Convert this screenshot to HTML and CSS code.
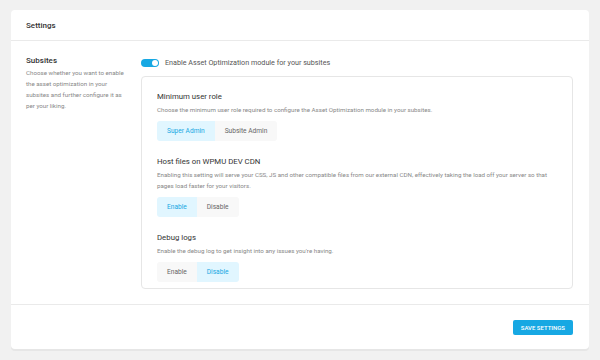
FILE: index.html
```html
<!DOCTYPE html>
<html lang="en">

<head>
    <meta charset="UTF-8">
    <meta name="viewport" content="width=device-width, initial-scale=1.0">
    <title>Settings</title>
    <link rel="stylesheet" href="styles.css">
</head>

<body>
    <div class="box">
        <div class="box-header">
            <h3>Settings</h3>
        </div>

        <div class="box-body">
            <div class="label-col">
                <h4>Subsites</h4>
                <p>Choose whether you want to enable the asset optimization in your subsites and further configure it as per your liking.</p>
            </div>

            <div class="content-col">
                <label class="toggle-row">
                    <span class="toggle"><span class="knob"></span></span>
                    Enable Asset Optimization module for your subsites
                </label>

                <div class="inner-box">
                    <div class="setting">
                        <h5>Minimum user role</h5>
                        <p>Choose the minimum user role required to configure the Asset Optimization module in your subsites.</p>
                        <div class="tabs">
                            <span class="tab active">Super Admin</span>
                            <span class="tab">Subsite Admin</span>
                        </div>
                    </div>

                    <div class="setting">
                        <h5>Host files on WPMU DEV CDN</h5>
                        <p>Enabling this setting will serve your CSS, JS and other compatible files from our external CDN, effectively taking the load off your server so that pages load faster for your visitors.</p>
                        <div class="tabs">
                            <span class="tab active">Enable</span>
                            <span class="tab">Disable</span>
                        </div>
                    </div>

                    <div class="setting">
                        <h5>Debug logs</h5>
                        <p>Enable the debug log to get insight into any issues you're having.</p>
                        <div class="tabs">
                            <span class="tab">Enable</span>
                            <span class="tab active">Disable</span>
                        </div>
                    </div>
                </div>
            </div>
        </div>

        <div class="box-footer">
            <button class="save-btn">Save Settings</button>
        </div>
    </div>
</body>

</html>
```

FILE: styles.css
```css
* {
    box-sizing: border-box;
}

body {
    margin: 0;
    padding: 10px 11px;
    background-color: #f1f1f1;
    font-family: Roboto, 'Liberation Sans', sans-serif;
    color: #333;
}

.box {
    width: 578px;
    background-color: #fff;
    border-radius: 4px;
    box-shadow: 0 2px 0 #e6e6e6;
}

.box-header {
    height: 31px;
    display: flex;
    align-items: center;
    padding: 0 15px;
    border-bottom: 1px solid #eaeaea;
}

.box-header h3 {
    margin: 0;
    font-size: 8px;
    font-weight: 500;
    color: #333;
}

.box-body {
    display: flex;
    padding: 14px 16px 15px 15px;
    border-bottom: 1px solid #eaeaea;
}

.label-col {
    width: 102px;
    margin-right: 13px;
    flex-shrink: 0;
}

.label-col h4 {
    margin: 0 0 1px;
    font-size: 8px;
    line-height: 12px;
    font-weight: 500;
    color: #333;
}

.label-col p {
    margin: 0;
    font-size: 6.2px;
    line-height: 11px;
    color: #888;
}

.content-col {
    flex: 1;
}

.toggle-row {
    display: flex;
    align-items: center;
    height: 13px;
    margin-top: 1px;
    margin-bottom: 7px;
    font-size: 7.2px;
    color: #555;
}

.toggle {
    width: 18px;
    height: 8px;
    border-radius: 4px;
    background-color: #17a8e3;
    margin-right: 6px;
    display: flex;
    align-items: center;
    justify-content: flex-end;
    padding: 0 1px;
}

.knob {
    width: 6px;
    height: 6px;
    border-radius: 50%;
    background-color: #fff;
}

.inner-box {
    border: 1px solid #e6e6e6;
    border-radius: 4px;
    padding: 14px 15px 6px;
}

.setting {
    margin-bottom: 15px;
}

.setting:last-child {
    margin-bottom: 0;
}

.setting h5 {
    margin: 0 0 2px;
    font-size: 7.8px;
    line-height: 12px;
    font-weight: 400;
    color: #333;
}

.setting p {
    margin: 0 0 5px;
    font-size: 6.2px;
    line-height: 11px;
    color: #888;
}

.tabs {
    display: flex;
}

.tab {
    height: 20px;
    display: flex;
    align-items: center;
    padding: 0 10px;
    background-color: #f8f8f8;
    font-size: 6.6px;
    color: #666;
}

.tab:first-child {
    border-radius: 3px 0 0 3px;
}

.tab:last-child {
    border-radius: 0 3px 3px 0;
}

.tab.active {
    background-color: #e1f6ff;
    color: #17a8e3;
}

.box-footer {
    height: 44px;
    display: flex;
    align-items: center;
    justify-content: flex-end;
    padding: 0 16px;
}

.save-btn {
    height: 15px;
    padding: 0 8px;
    border: none;
    border-radius: 2px;
    background-color: #17a8e3;
    color: #fff;
    font-family: inherit;
    font-size: 6px;
    font-weight: 500;
    text-transform: uppercase;
}
```
